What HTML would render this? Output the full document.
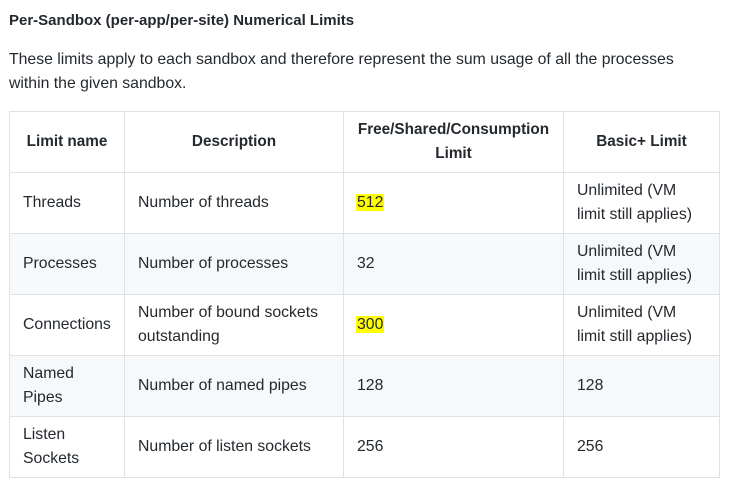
<!DOCTYPE html>
<html><head><meta charset="utf-8"><style>
body{margin:0;background:#fff;font-family:"Liberation Sans",Arial,sans-serif;color:#24292e;width:738px;height:495px;overflow:hidden}
.h{position:absolute;left:9px;top:11px;font-size:15px;font-weight:bold;line-height:20px}
.p{position:absolute;left:9px;top:48px;font-size:15.8px;line-height:24px;width:725px;white-space:nowrap}
table{position:absolute;left:9px;top:111px;border-collapse:collapse;table-layout:fixed;width:710px;font-size:15.8px;line-height:24px}
td,th{border:1px solid #dfe2e5;padding:0 13px;height:61px;box-sizing:border-box;vertical-align:middle;text-align:left;white-space:nowrap}
th{text-align:center;font-weight:bold;font-size:15.3px}
tr.g td{background:#f6f8fa}
mark{background:#ffff00;color:#24292e;padding:0 1px;margin-left:-1px}
</style></head><body>
<div class="h">Per-Sandbox (per-app/per-site) Numerical Limits</div>
<div class="p">These limits apply to each sandbox and therefore represent the sum usage of all the processes<br>within the given sandbox.</div>
<table>
<colgroup><col style="width:115px"><col style="width:219px"><col style="width:220px"><col style="width:156px"></colgroup>
<tr><th>Limit name</th><th>Description</th><th>Free/Shared/Consumption<br>Limit</th><th>Basic+ Limit</th></tr>
<tr><td>Threads</td><td>Number of threads</td><td><mark>512</mark></td><td>Unlimited (VM<br>limit still applies)</td></tr>
<tr class="g"><td>Processes</td><td>Number of processes</td><td>32</td><td>Unlimited (VM<br>limit still applies)</td></tr>
<tr><td>Connections</td><td>Number of bound sockets<br>outstanding</td><td><mark>300</mark></td><td>Unlimited (VM<br>limit still applies)</td></tr>
<tr class="g"><td>Named<br>Pipes</td><td>Number of named pipes</td><td>128</td><td>128</td></tr>
<tr><td>Listen<br>Sockets</td><td>Number of listen sockets</td><td>256</td><td>256</td></tr>
</table>
</body></html>
